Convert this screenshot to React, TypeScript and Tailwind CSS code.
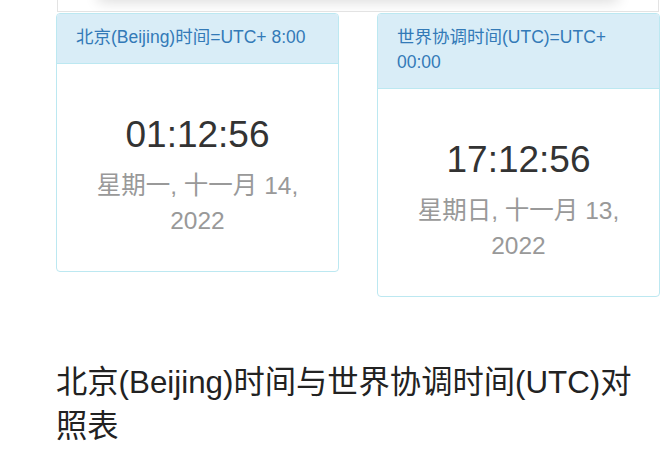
const fontStack = {
  fontFamily: '"Liberation Sans", "Noto Sans CJK SC", sans-serif',
};

type Clock = {
  title: string;
  time: string;
  date: string;
};

const clocks: Clock[] = [
  {
    title: "北京(Beijing)时间=UTC+ 8:00",
    time: "01:12:56",
    date: "星期一, 十一月 14, 2022",
  },
  {
    title: "世界协调时间(UTC)=UTC+ 00:00",
    time: "17:12:56",
    date: "星期日, 十一月 13, 2022",
  },
];

const ClockPanel = ({ clock }: { clock: Clock }) => {
  return (
    <div className="w-[283px] shrink-0 overflow-hidden rounded-[4px] border border-[#bce8f1] bg-white">
      <div className="border-b border-[#bce8f1] bg-[#d9edf7] px-[19px] pt-[11px] pb-[13px] text-[17.5px] leading-[25px] text-[#337ab7]">
        {clock.title}
      </div>
      <div className="px-[15px] pt-[51px] pb-[33px] text-center">
        <div className="text-[37px] leading-[40px] text-[#333]">
          {clock.time}
        </div>
        <div className="mt-[13px] text-[24.5px] leading-[35px] text-[#999]">
          {clock.date}
        </div>
      </div>
    </div>
  );
};

export default function App() {
  return (
    <div className="min-h-[454px] bg-white" style={fontStack}>
      {/* bottom edge of the panel above, with its inner shadow */}
      <div className="relative ml-[57px] h-[12px] w-[602px] overflow-hidden border-x border-b border-[#e3e3e3] bg-white">
        <div className="absolute top-[-20px] right-[40px] left-[40px] h-[20px] bg-white shadow-[0_2px_14px_rgba(0,0,0,0.14)]" />
      </div>

      <div className="mt-[1px] flex items-start gap-[38px] pl-[56px]">
        {clocks.map((clock) => (
          <ClockPanel key={clock.time} clock={clock} />
        ))}
      </div>

      <h2 className="mt-[64px] w-[655px] pl-[56px] text-[31.3px] leading-[44px] font-normal text-[#222]">
        北京(Beijing)时间与世界协调时间(UTC)对照表
      </h2>
    </div>
  );
}
